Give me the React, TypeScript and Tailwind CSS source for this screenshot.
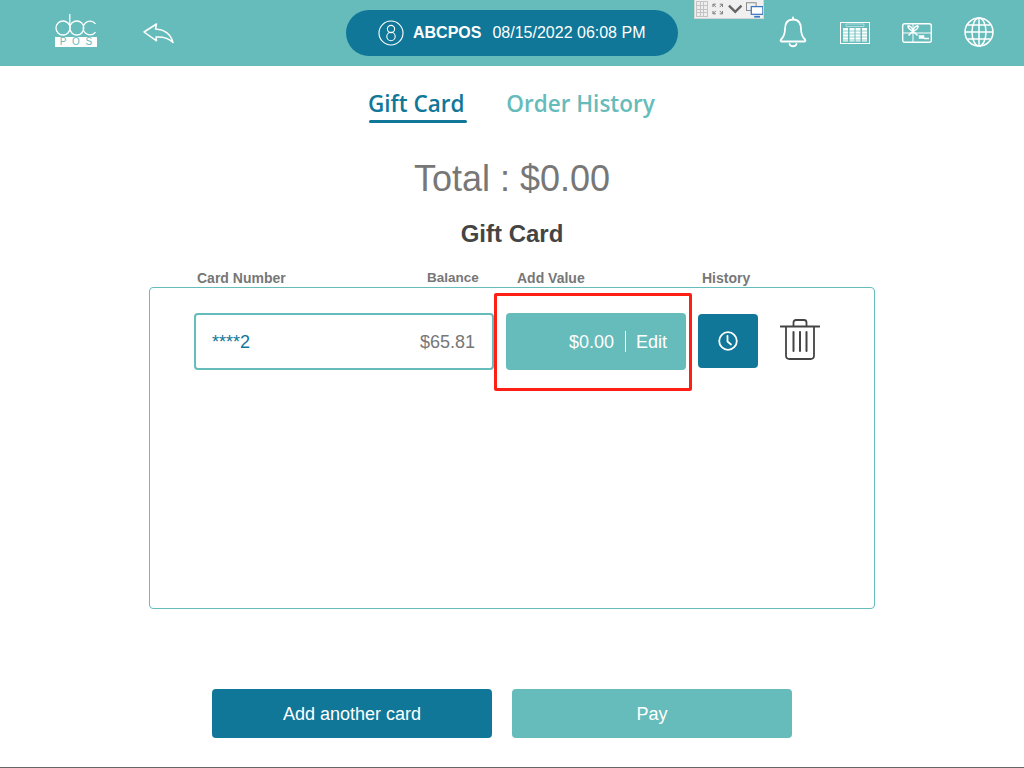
import React from "react";

const Logo = () => (
  <div className="flex flex-col items-center w-[42px] mb-[5px]">
    <svg width="42" height="22" viewBox="0 0 42 22" fill="none" stroke="white" strokeWidth="1.300">
      <circle cx="8" cy="14" r="7" />
      <path d="M14.800 14V0" />
      <circle cx="21.800" cy="14" r="7" />
      <path d="M40.500 9.800A6.900 6.900 0 1 0 40.500 18.200" />
    </svg>
    <div className="w-[42px] h-[10px] mt-[1px] bg-white flex items-center justify-around px-[2px] text-[10px] leading-none text-[#66bbbb] font-['Liberation_Sans',sans-serif]">
      <span>P</span><span>O</span><span>S</span>
    </div>
  </div>
);

const Back = () => (
  <svg width="32" height="22" viewBox="0 0 32 22" fill="none" stroke="white" strokeWidth="1.500" strokeLinejoin="round">
    <path d="M1 10 L13.500 2 L12.500 7 C21 7.500 27.500 11 30 20.500 C25.500 16 20 14.500 13 15 L13.500 18.800 Z" />
  </svg>
);

const Bell = () => (
  <svg width="28" height="32" viewBox="0 0 28 32" fill="none" stroke="white" strokeWidth="1.800" strokeLinejoin="round" strokeLinecap="round">
    <path d="M14 1.500V3.500" />
    <path d="M14 3.500C8 3.500 6 8 6 13C6 18 4.500 21 2 23.500C1.200 24.500 1.500 25.500 3 25.500H25C26.500 25.500 26.800 24.500 26 23.500C23.500 21 22 18 22 13C22 8 20 3.500 14 3.500Z" />
    <path d="M10.500 28C11.500 31 16.500 31 17.500 28" />
  </svg>
);

const Calendar = () => (
  <svg width="30" height="22" viewBox="0 0 30 22" fill="none">
    <rect x="0.500" y="0.500" width="29" height="21" stroke="white" />
    <rect x="6" y="2" width="18" height="2.500" stroke="white" strokeWidth="0.500" />
    <rect x="3" y="6" width="5" height="13.500" fill="white" />
    <rect x="9.500" y="6" width="5" height="13.500" fill="white" />
    <rect x="15.500" y="6" width="5" height="13.500" fill="white" />
    <rect x="22" y="6" width="5" height="13.500" fill="white" />
    <path d="M3 9H27M3 12H27M3 15H27M3 18H27" stroke="#66bbbb" strokeWidth="0.700" />
  </svg>
);

const GiftCardIcon = () => (
  <svg width="30" height="20" viewBox="0 0 30 20" fill="none" stroke="white">
    <rect x="0.700" y="0.700" width="28.600" height="18.600" rx="2" strokeWidth="1.400" />
    <path d="M11 1V19M1 10H29" strokeWidth="1" />
    <path d="M11 8C8 7 5.500 4.500 6 3C8 2.500 11 5 11 8C11 5 14 2.500 16 3C16.500 5 14 7 11 8L6.500 12.500M11 8L15.500 12.500" strokeWidth="1.500" />
    <rect x="17" y="12.500" width="5" height="3" fill="white" strokeWidth="0.500" />
    <path d="M22 15.500H27" strokeWidth="1.500" />
  </svg>
);

const Globe = () => (
  <svg width="30" height="30" viewBox="0 0 30 30" fill="none" stroke="white" strokeWidth="1.500">
    <circle cx="15" cy="15" r="14" />
    <ellipse cx="15" cy="15" rx="7" ry="14" />
    <path d="M15 1V29M1 15H29M3.500 8H26.500M3.500 22H26.500" />
  </svg>
);

const Eight = () => (
  <svg width="26" height="26" viewBox="0 0 26 26" fill="none" stroke="white" strokeWidth="1.100">
    <circle cx="13" cy="13" r="12" />
    <circle cx="13" cy="9" r="3.600" />
    <circle cx="13" cy="16.500" r="4.200" />
  </svg>
);

const Clock = () => (
  <svg width="20" height="20" viewBox="0 0 20 20" fill="none" stroke="white" strokeWidth="1.800" strokeLinecap="round" strokeLinejoin="round">
    <circle cx="10" cy="10" r="8.800" />
    <path d="M9.500 4.800V10.500L13 13.500" />
  </svg>
);

const Trash = () => (
  <svg width="40" height="42" viewBox="0 0 40 42" fill="none" stroke="#444444" strokeWidth="1.800" strokeLinecap="round" strokeLinejoin="round">
    <path d="M0.500 7.500H39.500" />
    <path d="M13.500 7V3.500C13.500 2 14.500 1 16 1H24C25.500 1 26.500 2 26.500 3.500V7" />
    <path d="M6 8V36.500C6 38.800 7.500 40 9.500 40H30.500C32.500 40 34 38.800 34 36.500V8" />
    <path d="M13.500 13V32M20 13V32M26.500 13V32" strokeWidth="2" />
  </svg>
);

const WindowBar = () => (
  <div className="absolute left-[694px] top-0 w-[70px] h-[19px] bg-[#f0f0f0] border-b border-r border-l border-[#d5d5d5] flex items-center gap-[3px] pl-[1px]">
    <div className="w-[12px] h-[16px] bg-[#c4c4c4] grid grid-cols-3 gap-[1px] p-[1px]">
      {Array.from({ length: 12 }).map((_, i) => (
        <div key={i} className="bg-[#eeeeee]" />
      ))}
    </div>
    <svg width="12" height="12" viewBox="0 0 12 12" fill="none" stroke="#777777" strokeWidth="1" className="ml-[1px]">
      <path d="M1 4V1H4M8 1H11V4M1 8V11H4M8 11H11V8M1 1L4 4M11 1L8 4M1 11L4 8M11 11L8 8" />
    </svg>
    <svg width="15" height="10" viewBox="0 0 15 10" fill="none" stroke="#666666" strokeWidth="2.500" className="ml-[2px]">
      <path d="M1 1.500L7.500 8L14 1.500" />
    </svg>
    <svg width="18" height="17" viewBox="0 0 18 17" fill="none">
      <rect x="0.500" y="1.500" width="10" height="8" fill="#f0f0f0" stroke="#888888" />
      <rect x="5.500" y="5.500" width="12" height="8" fill="#ffffff" stroke="#3b78c4" strokeWidth="1.300" />
      <path d="M8.500 16H14.500" stroke="#3b78c4" strokeWidth="1.800" />
    </svg>
  </div>
);

export default function App() {
  return (
    <div className="relative w-[1024px] h-[768px] bg-white overflow-hidden font-['Liberation_Sans',Arial,sans-serif] border-b border-[#666666]">
      <header className="h-[66px] bg-[#66bbbb] flex items-center">
        <div className="w-[346px] flex items-center pl-[55px] gap-[46px]">
          <Logo />
          <Back />
        </div>
        <div className="w-[332px] h-[46px] rounded-[23px] bg-[#107799] flex items-center pl-[32px] text-white">
          <Eight />
          <span className="ml-[9px] font-bold text-[16px]">ABCPOS</span>
          <span className="ml-[11px] text-[16px]">08/15/2022 06:08 PM</span>
        </div>
        <div className="flex-1 flex items-center pl-[101px] mb-[2px]">
          <Bell />
          <div className="ml-[33px] mt-[2px]"><Calendar /></div>
          <div className="ml-[32px] mt-[2px]"><GiftCardIcon /></div>
          <div className="ml-[32px]"><Globe /></div>
        </div>
      </header>

      <WindowBar />

      <main className="flex flex-col items-center">
        <nav className="mt-[22px] mr-[2px] flex gap-[41px] font-['Open_Sans',sans-serif] font-semibold text-[22.500px] leading-[32px]">
          <div className="flex flex-col items-center text-[#107799]">
            <span>Gift Card</span>
            <div className="w-[98px] h-[3px] rounded-full bg-[#107799] translate-x-[2px]" />
          </div>
          <span className="text-[#66bbbb]">Order History</span>
        </nav>

        <div className="mt-[34px] text-[36px] leading-[44px] text-[#777777]">Total : $0.00</div>
        <div className="mt-[19px] text-[24px] leading-[28px] font-bold text-[#444444]">Gift Card</div>

        <div className="mt-[22px] w-[726px] flex text-[14px] leading-[16px] font-bold text-[#777777]">
          <span className="ml-[48px] w-[230px]">Card Number</span>
          <span className="w-[90px] text-[13.500px]">Balance</span>
          <span className="w-[185px]">Add Value</span>
          <span>History</span>
        </div>

        <section className="mt-[1px] w-[726px] h-[322px] rounded-[4px] border border-[#66bbbb] relative">
          <div className="flex items-start pl-[44px] pt-[25px]">
            <div className="w-[300px] h-[57px] rounded-[4px] border-2 border-[#66bbbb] flex items-center justify-between pl-[16px] pr-[17px] pt-[2px] text-[18px]">
              <span className="text-[#107799]">****2</span>
              <span className="text-[#777777]">$65.81</span>
            </div>
            <div className="ml-[12px] w-[180px] h-[57px] rounded-[4px] bg-[#66bbbb] flex items-center justify-end pr-[19px] pt-[2px] text-[18px] text-white">
              <span>$0.00</span>
              <div className="w-px h-[21px] bg-white ml-[11px] mr-[10px] -mt-[2px]" />
              <span>Edit</span>
            </div>
            <div className="ml-[12px] mt-[1px] w-[60px] h-[54px] rounded-[4px] bg-[#107799] flex items-center justify-center">
              <Clock />
            </div>
            <div className="ml-[22px] mt-[6px]">
              <Trash />
            </div>
          </div>
          <div className="absolute left-[344px] top-[5px] w-[198px] h-[98px] rounded-[2px] border-[3px] border-[#ff2015]" />
        </section>

        <div className="mt-[80px] mr-[20px] flex gap-[20px] text-[18px] text-white">
          <button className="w-[280px] h-[49px] rounded-[4px] bg-[#107799] pt-[2px]">Add another card</button>
          <button className="w-[280px] h-[49px] rounded-[4px] bg-[#66bbbb] pt-[2px]">Pay</button>
        </div>
      </main>
    </div>
  );
}
